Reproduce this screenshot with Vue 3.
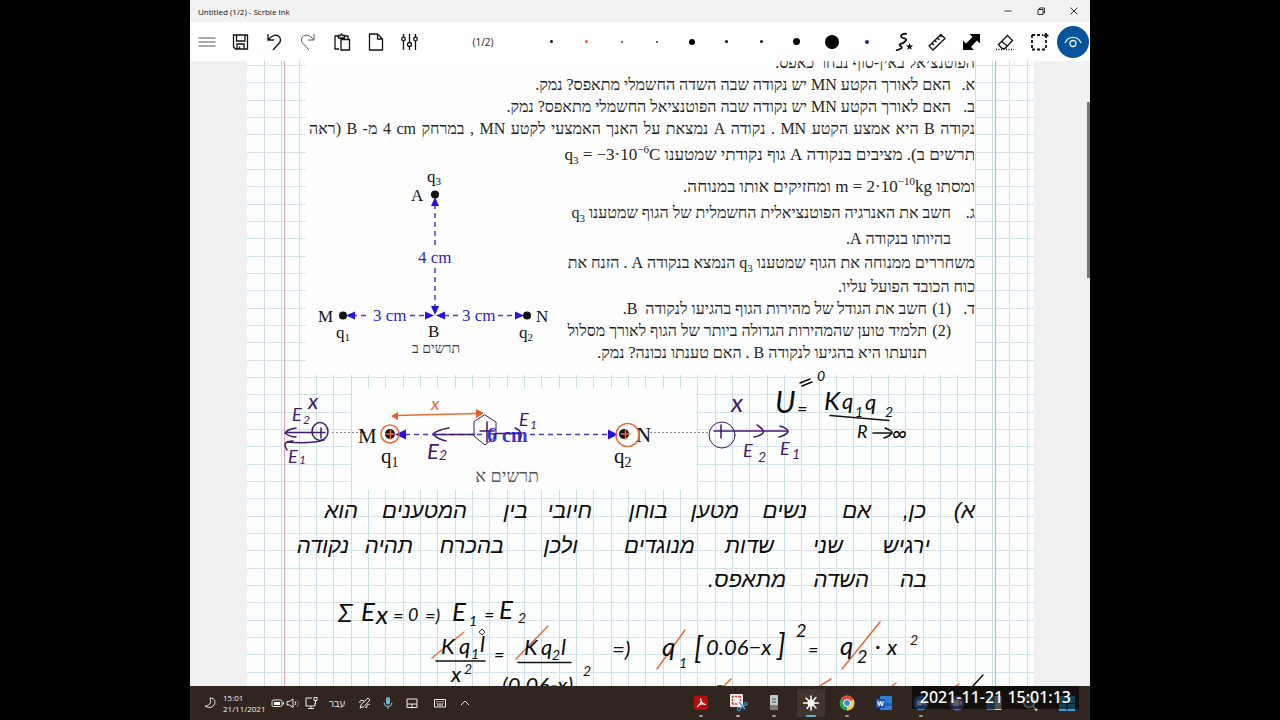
<script setup>
const range = (from, to, step) => {
  const out = []
  for (let v = from; v <= to; v += step) out.push(Math.round(v))
  return out
}
const columns = range(264, 1034, 17.33)
const rows = range(65, 690, 17.33)

const pens = [
  { d: 3, c: '#111' }, { d: 3, c: '#e0603a' }, { d: 2, c: '#333a5a' }, { d: 2, c: '#3a2a8a' },
  { d: 6, c: '#000' }, { d: 3, c: '#000' }, { d: 3, c: '#111' }, { d: 7, c: '#000' },
  { d: 14, c: '#000' }, { d: 4, c: '#4b1a7a' },
]

const notes = [
  [975, 518, 'א)'], [926, 518, 'כן,'], [871, 518, 'אם'], [807, 518, 'נשים'], [739, 518, 'מטען'],
  [668, 518, 'בוחן'], [592, 518, 'חיובי'], [528, 518, 'בין'], [467, 518, 'המטענים'], [358, 518, 'הוא'],
  [930, 553, 'ירגיש'], [843, 553, 'שני'], [774, 553, 'שדות'], [695, 553, 'מנוגדים'], [578, 553, 'ולכן'],
  [504, 553, 'בהכרח'], [413, 553, 'תהיה'], [349, 553, 'נקודה'],
  [927, 587, 'בה'], [869, 587, 'השדה'], [786, 587, 'מתאפס.'],
]

const ink = [
  [338, 622, 'Σ', 'xl'], [361, 621, 'E', 'xl'], [376, 624, 'x', 'xl'], [393, 622, '=', 'md'],
  [408, 621, '0', 'md'], [425, 622, '=)', 'md'], [452, 621, 'E', 'xl'], [469, 626, '1', 'sm'],
  [484, 621, '=', 'md'], [499, 619, 'E', 'xl'], [518, 623, '2', 'sm'],
  [441, 654, 'K', 'lg'], [459, 654, 'q', 'lg'], [471, 659, '1', 'sm'], [480, 652, 'l', 'lg'],
  [451, 682, 'x', 'lg'], [464, 674, '2', 'sm'], [494, 661, '=', 'md'],
  [524, 655, 'K', 'lg'], [541, 655, 'q', 'lg'], [552, 660, '2', 'sm'], [561, 655, 'l', 'lg'],
  [502, 693, '(0.06-x)', 'lg'], [583, 676, '2', 'sm'], [612, 657, '=)', 'lg'],
  [662, 656, 'q', 'xl'], [679, 668, '1', 'sm'], [694, 659, '[', 'xxl'], [706, 655, '0.06−x', 'lg'],
  [777, 656, ']', 'xxl'], [796, 637, '2', 'md'], [808, 656, '=', 'md'],
  [840, 655, 'q', 'xl'], [857, 663, '2', 'md'], [875, 654, '·', 'lg'], [887, 655, 'x', 'lg'], [910, 645, '2', 'sm'],
  [775, 413, 'U', 'xxl'], [797, 415, '=', 'md'], [817, 381, '0', 'sm'], [824, 410, 'K', 'xl'],
  [842, 409, 'q', 'lg'], [855, 417, '1', 'sm'], [865, 410, 'q', 'lg'], [885, 417, '2', 'sm'],
  [857, 438, 'R', 'md'], [892, 441, '∞', 'lg'],
]
const purple = [
  [308, 409, 'x', 'lg'], [292, 421, 'E', 'md'], [303, 424, '2', 'xs'], [288, 463, 'E', 'md'], [299, 464, '1', 'xs'],
  [519, 426, 'E', 'md'], [530, 429, '1', 'xs'], [427, 459, 'E', 'lg'], [439, 460, '2', 'sm'],
  [731, 412, 'x', 'xl'], [743, 457, 'E', 'md'], [758, 462, '2', 'sm'], [780, 455, 'E', 'md'], [792, 459, '1', 'sm'],
]
</script>

<template>
  <main class="window">
    <header class="titlebar">
      <h1>Untitled (1/2) - Scrble Ink</h1>
      <div class="controls">
        <button aria-label="Minimize"><svg viewBox="0 0 10 10"><path d="M1.500 5h7" /></svg></button>
        <button aria-label="Restore"><svg viewBox="0 0 10 10"><path d="M2 3.500h5v5H2zM3.500 3.500V2h5v5H7" /></svg></button>
        <button aria-label="Close"><svg viewBox="0 0 10 10"><path d="M1.500 1.500l7 7M8.500 1.500l-7 7" /></svg></button>
      </div>
    </header>

    <nav class="toolbar" aria-label="Tools">
      <button aria-label="Menu"><svg viewBox="0 0 20 20" class="thin"><path d="M1.500 6h17M1.500 10h17M1.500 14h17" /></svg></button>
      <button aria-label="Save"><svg viewBox="0 0 20 20"><path d="M2.500 3h14v14H4.500l-2-2zM5.500 3v6h8.500V3M6 17v-5h7v5M8.500 14.500V17" /></svg></button>
      <button aria-label="Undo"><svg viewBox="0 0 20 20"><path d="M3 2v6h6M3.500 7.500C7 3 12 2 14.500 5c2 3 1 5-1 7L8 18" /></svg></button>
      <button aria-label="Redo"><svg viewBox="0 0 20 20" class="thin"><path d="M15 2v6H9M14.500 7.500C11 3 6 2 3.500 5c-2 3-1 5 1 7L10 18" /></svg></button>
      <button aria-label="Paste"><svg viewBox="0 0 20 20"><path d="M6 17H2V4h4M11 4h4v3M5.500 6V3.500h2q1-3 2 0h2V6zM8 7.500h8.500V18H8z" /></svg></button>
      <button aria-label="New page"><svg viewBox="0 0 20 20"><path d="M2.500 2h8l5 5v11h-13zM10.500 2v5h5" /></svg></button>
      <button aria-label="Settings"><svg viewBox="0 0 20 20"><path d="M2.500 2v3M2.500 9v9M8.500 2v8M8.500 15v3M14.500 2v3M14.500 9v9" /><circle cx="2.500" cy="7" r="1.800" /><circle cx="8.500" cy="12.500" r="2" /><circle cx="14.500" cy="7" r="1.800" /></svg></button>
      <span class="pages">(1/2)</span>
      <button v-for="(p, i) in pens" :key="i" class="pen" :aria-label="'Pen ' + (i + 1)">
        <i :style="{ width: p.d + 'px', height: p.d + 'px', background: p.c }"></i>
      </button>
      <span class="tools">
        <button aria-label="Shape pen"><svg viewBox="0 0 20 20" class="bold"><path d="M14 2c-4-1-8 2-5 3.500s6 1 3 4-7 2-5 4 3 2 0 3.500-4 1-4 1" /><path class="solid" d="M16.500 11l1 2.500h2.500l-2 1.700.8 2.500-2.300-1.500-2.300 1.500.8-2.500-2-1.700h2.500z" /></svg></button>
        <button aria-label="Ruler"><svg viewBox="0 0 20 20"><path d="M2 14L14 2.500l4 4L6 18zM5 11l2 2M8 8.500l1.500 1.500M10.500 6l2 2M13 3.500l1.500 1.500" /></svg></button>
        <button aria-label="Resize"><svg viewBox="0 0 20 20"><path class="solid" d="M8.500 2H19v9.500l-3-3L10 15l3 3H2V8.500l3 3L11.500 5z" /></svg></button>
        <button aria-label="Eraser"><svg viewBox="0 0 20 20"><path d="M3.500 12.500l9-9 5 5-7.500 8H7zM6.500 9.500l6 4.500" /><path d="M1 17.500h18" stroke-dasharray="1 1.500" /></svg></button>
        <button aria-label="Select"><svg viewBox="0 0 20 20" class="bold"><path d="M3 3h11M17 8v9.500M3 17.500h14M3 3v14.500" stroke-dasharray="3 2" /><path d="M17 1v5M14.500 3.500h5" /></svg></button>
        <button class="view" aria-label="View"><svg viewBox="0 0 20 20"><path d="M2 11C5 3.500 15 3.500 18 11" /><circle cx="10" cy="11.500" r="3" /></svg></button>
      </span>
    </nav>

    <section class="workspace">
      <article class="sheet">
        <svg class="page" viewBox="247 61 787 625">
          <g class="grid">
            <path v-for="x in columns" :key="'c' + x" class="col" :d="`M${x + 0.5} 61V690`" />
            <path v-for="y in rows" :key="'r' + y" class="row" :d="`M247 ${y + 0.5}H1034`" />
            <path class="margin" d="M284.500 61V690M995.500 61V690" />
          </g>
          <rect class="paste" x="306" y="61" width="669" height="314" />
          <rect class="paste" x="352" y="388" width="344" height="102" />

          <foreignObject x="309" y="52" width="666" height="320">
            <div class="problem" lang="he" dir="rtl">
              <p>הפוטנציאל באין-סוף נבחר כאפס.</p>
              <p><b>א.</b>האם לאורך הקטע MN יש נקודה שבה השדה החשמלי מתאפס? נמק.</p>
              <p><b>ב.</b>האם לאורך הקטע MN יש נקודה שבה הפוטנציאל החשמלי מתאפס? נמק.</p>
              <p class="fill">נקודה B היא אמצע הקטע MN . נקודה A נמצאת על האנך האמצעי לקטע MN , במרחק <bdi dir="ltr">4 cm</bdi> מ- B (ראה</p>
              <p class="gap big">תרשים ב). מציבים בנקודה A גוף נקודתי שמטענו <bdi dir="ltr">q<sub>3</sub> = −3·10<sup>−6</sup>C</bdi></p>
              <p class="wide big">ומסתו <bdi dir="ltr">m = 2·10<sup>−10</sup>kg</bdi> ומחזיקים אותו במנוחה.</p>
              <p class="gap"><b>ג.</b>חשב את האנרגיה הפוטנציאלית החשמלית של הגוף שמטענו <bdi dir="ltr">q<sub>3</sub></bdi></p>
              <p class="gap"><b></b>בהיותו בנקודה A.</p>
              <p class="near">משחררים ממנוחה את הגוף שמטענו <bdi dir="ltr">q<sub>3</sub></bdi> הנמצא בנקודה A . הזנח את</p>
              <p class="near">כוח הכובד הפועל עליו.</p>
              <p><b>ד.</b><b>(1)</b>חשב את הגודל של מהירות הגוף בהגיעו לנקודה&nbsp; B.</p>
              <p><b></b><b>(2)</b>תלמיד טוען שהמהירות הגדולה ביותר של הגוף לאורך מסלול</p>
              <p><b></b><b></b>תנועתו היא בהגיעו לנקודה B . האם טענתו נכונה? נמק.</p>
            </div>
          </foreignObject>

          <g class="figure">
            <path class="dash" d="M435 204V246M435 268V306M352 315.500H370M410 315.500H426M444 315.500H460M498 315.500H516" />
            <path class="tip" d="M435 197l4 9h-8zM435 315l4-9h-8zM346 315.500l9-4v8zM434 315.500l-9-4v8zM436 315.500l9-4v8zM524 315.500l-9-4v8z" />
            <circle cx="435" cy="194.500" r="4" /><circle cx="343" cy="315.500" r="4" /><circle cx="527" cy="315.500" r="4" />
            <text x="427" y="182">q<tspan class="sub" dy="3">3</tspan></text>
            <text x="411" y="201">A</text>
            <text x="318" y="322">M</text>
            <text x="336" y="338">q<tspan class="sub" dy="3">1</tspan></text>
            <text x="428" y="337">B</text>
            <text x="536" y="322">N</text>
            <text x="519" y="338">q<tspan class="sub" dy="3">2</tspan></text>
            <text class="blue" x="418" y="263">4 cm</text>
            <text class="blue" x="373" y="321">3 cm</text>
            <text class="blue" x="462" y="321">3 cm</text>
            <text class="caption" x="460" y="353">תרשים ב</text>
          </g>

          <g class="figure large">
            <path class="axis" d="M332 432.500H368M650 432.500H710" />
            <path class="dash" d="M405 434.500H484M530 434.500H608" />
            <path class="tip" d="M395 434.500l11-5v10zM618 434.500l-10-5v10z" />
            <circle cx="390" cy="434" r="5" /><circle cx="624" cy="434" r="5" />
            <text x="358" y="443">M</text>
            <text x="636" y="442">N</text>
            <text x="381" y="463">q<tspan class="sub" dy="4">1</tspan></text>
            <text x="614" y="463">q<tspan class="sub" dy="4">2</tspan></text>
            <text class="blue strong" x="487" y="442">6 cm</text>
            <text class="caption" x="539" y="482">תרשים א</text>
          </g>

          <g class="stroke orange">
            <circle cx="390" cy="434" r="9" /><circle cx="627.500" cy="435" r="11.500" />
            <path d="M386 434h9M390.500 430v9M621 434h9M625.500 430v9M397 415.500L476 413.500" />
            <path class="tip" d="M391 416l7-4v8zM484 413l-8-4v9z" />
            <path d="M432 658L464 632M516 659L548 626M657 669L685 630M842 669L880 622M723 687L731 679M820 686L831 679M891 687L896 683M955 687L959 684" />
          </g>
          <text class="ink orange-text md" x="431" y="410">x</text>

          <g class="stroke violet">
            <ellipse cx="320" cy="431.500" rx="8" ry="9" />
            <path d="M315 432.500h10M321 428v10M322 432.500H286M296 428Q288 429 285 433Q290 437 296 437M324 440Q310 444 287 442M293 441Q281 441 287 450" />
            <path d="M485 415l11 7v14l-11 9-11-9v-14z" stroke-width="1" />
            <path d="M487 422v20M480 431h14M495 433.500H520M515 428q9 4 5 11M474 434.500H435M449 428Q437 430 433 434Q437 439 446 441" />
            <circle cx="722" cy="435" r="13" stroke-width="1" />
            <path d="M721 425v13M714 431h74M757 425q8 5 6 8q-3 3-9 4M780 426q9 3 8 6q-2 3-9 5" />
          </g>
          <g class="ink violet-text">
            <text v-for="(m, i) in purple" :key="i" :x="m[0]" :y="m[1]" :class="m[3]">{{ m[2] }}</text>
          </g>

          <g class="stroke black">
            <path d="M800 383l10-4M802 386l10-4M830 415.500l59 5M873 433h19M885 428q8 3 7 5q-2 3-8 5" />
            <path d="M436 661H485M518 662.500H571M972 687L983 675M718 686h4" />
          </g>
          <g class="ink">
            <text v-for="(m, i) in ink" :key="i" :x="m[0]" :y="m[1]" :class="m[3]">{{ m[2] }}</text>
          </g>
          <g class="ink hebrew" lang="he">
            <text v-for="(n, i) in notes" :key="i" :x="n[0]" :y="n[1]">{{ n[2] }}</text>
          </g>
          <path class="cursor" d="M482 629l3 3-3 3-3-3z" />
        </svg>
      </article>
      <div class="scrollbar"></div>
    </section>

    <footer class="taskbar">
      <button class="w20" aria-label="Focus"><svg viewBox="0 0 16 16"><path d="M8 3c5 0 6 4 4 7s-6 3-9 1c4 0 7-3 5-8z" /></svg></button>
      <time class="clock">15:01<br />21/11/2021</time>
      <button class="w16" aria-label="Battery"><svg viewBox="0 0 16 16"><rect x="3" y="5" width="10" height="6.500" rx="1.500" /><path d="M14.500 7v2.500" /><path class="solid" d="M5 7h6v3H5z" /></svg></button>
      <button class="w16" aria-label="Volume"><svg viewBox="0 0 16 16"><path d="M2 6.500h2.500L8 4v8.500L4.500 10H2zM10 6.500q1.500 1.500 0 3.500" /><path d="M12 5q3 3.500 0 7" opacity=".4" /></svg></button>
      <button class="w20" aria-label="Network"><svg viewBox="0 0 16 16"><path d="M9 3H3v8h9V8M5 13.500h6M8 11v2M11 2.500h3v3h-3zM12.500 5.500V9" /></svg></button>
      <span class="lang" lang="he">עבר</span>
      <button class="w23" aria-label="Pen menu"><svg viewBox="0 0 16 16"><path d="M3 13l1.500-4L11 3l2 2-6 6.500zM3 8q-1-4 4-2M8 12q2 2 2-1t3-1" /></svg></button>
      <button class="w23 mic" aria-label="Microphone"><svg viewBox="0 0 16 16"><rect class="solid" x="6" y="2" width="4" height="7.500" rx="2" /><path d="M4 7.500q0 4 4 4t4-4M8 11.500V14" /></svg></button>
      <button class="w26" aria-label="Touchpad"><svg viewBox="0 0 16 16"><path d="M3 4h10v8.500H3zM3 9h10M8 9v3.500" /></svg></button>
      <button class="w30" aria-label="Keyboard"><svg viewBox="0 0 16 16"><path d="M2.500 4.500h11v7.500h-11zM5 10h6" /><path d="M4.500 6.500h8M4.500 8.300h8" stroke-dasharray="1 1" /></svg></button>
      <button class="w20" aria-label="Show hidden icons"><svg viewBox="0 0 16 16"><path d="M4 10l4-4 4 4" /></svg></button>

      <div class="apps">
        <button class="run" aria-label="Acrobat"><svg viewBox="0 0 20 20"><rect x="3" y="2.500" width="14" height="14.500" rx="2.500" fill="#b80d0d" /><path d="M9.500 5.500C11 9 9 12 6 14M9.800 8q2 3.500 5 3.500M7.500 12q4-2 7-.5" fill="none" stroke="#fff" stroke-width="1.200" /></svg></button>
        <button class="run rose" aria-label="Snipping Tool"><svg viewBox="0 0 20 20"><rect x="2" y="1" width="13" height="13" rx="1" fill="#f5eeee" /><path d="M4 3.500h9M4 11h6M4.500 3v9M12.500 3v6" fill="none" stroke="#d0443c" stroke-width="1.500" stroke-dasharray="2 1" /><path d="M11 9l6 7M18 11l-7 5" stroke="#4aa6dd" stroke-width="1.500" /><circle cx="11" cy="16" r="1.800" fill="#35312d" stroke="#4aa6dd" /><circle cx="17.500" cy="11" r="1.600" fill="#35312d" stroke="#4aa6dd" /></svg></button>
        <button class="run" aria-label="Device"><svg viewBox="0 0 20 20"><rect x="6" y="2" width="8" height="15" rx="1" fill="#c4c7c4" /><path d="M8 6h4M8 9h4" stroke="#555" /><path d="M6 12h8v5H6z" fill="#7d817d" /></svg></button>
        <button class="run active" aria-label="Scrble Ink"><svg viewBox="0 0 20 20"><circle cx="10" cy="10" r="3.500" fill="#fff" /><path d="M10 10V3M10 10v7M10 10H2.500M10 10h7.500M10 10L5 5M10 10l5-5.500M10 10l-4 5.500M10 10l5 5" stroke="#fff" stroke-width="1.500" stroke-linecap="round" /></svg></button>
        <button class="run" aria-label="Chrome"><svg viewBox="0 0 20 20"><circle cx="10" cy="10" r="7.500" fill="#31a350" /><path d="M10 10L3.500 6.300A7.500 7.500 0 0 1 16.500 6.300z" fill="#dd4b3a" /><path d="M10 10l6.500-3.700A7.500 7.500 0 0 1 10 17.500z" fill="#f7cb3f" /><circle cx="10" cy="10" r="3.500" fill="#4285e8" stroke="#fff" /></svg></button>
        <button aria-label="Word"><svg viewBox="0 0 20 20"><rect x="6" y="3" width="12" height="14" rx="1" fill="#2d7fd3" /><path d="M6 10h12v3H6z" fill="#1a5dbe" /><rect x="2" y="6" width="9" height="9" rx="1" fill="#1d50b0" /><text x="3" y="13" fill="#fff" font-family="Open Sans" font-size="7" font-weight="700">W</text></svg></button>
        <button class="run" aria-label="Zoom"><svg viewBox="0 0 20 20"><circle cx="10" cy="10" r="7.500" fill="#3c80e8" /><path d="M6 7.500h5v5H6zM12 9l2.500-1.500v5L12 11z" fill="#fff" /></svg></button>
        <button aria-label="Chat"><svg viewBox="0 0 20 20"><circle cx="10" cy="10" r="7.500" fill="#6a63c4" /><path d="M6 7h6v6H6zM12.500 9l2.500-1.500v5L12.500 11z" fill="#eee" /></svg></button>
        <button aria-label="Widgets"><svg viewBox="0 0 20 20"><rect x="2.500" y="3" width="7.500" height="14" fill="#2a86ce" /><rect x="10.500" y="3" width="7" height="14" fill="#c9d3dc" /></svg></button>
        <button aria-label="Search"><svg viewBox="0 0 20 20"><circle cx="9" cy="9" r="5.500" fill="#555" stroke="#ddd" stroke-width="1.500" /><path d="M13 13l4 4.500" stroke="#ddd" stroke-width="2" /></svg></button>
        <button aria-label="Start"><svg viewBox="0 0 20 20"><path d="M2 3h7.500v7H2zM10.500 3H18v7h-7.500zM2 11h7.500v7H2zM10.500 11H18v7h-7.500z" fill="#2fa4dc" /></svg></button>
        <time class="stamp">2021-11-21 15:01:13</time>
      </div>
    </footer>
  </main>
</template>

<style>
html, body { margin: 0; background: #000; }
</style>

<style scoped>
.window {
  width: calc(100% - 380px);
  height: 100vh;
  margin: 0 auto;
  display: flex;
  flex-direction: column;
  overflow: hidden;
  background: #f0f0f0;
  font-family: "Open Sans", "Liberation Sans", sans-serif;
}
button {
  display: flex;
  align-items: center;
  justify-content: center;
  padding: 0;
  border: 0;
  background: none;
  color: inherit;
}
.titlebar { display: flex; flex: 0 0 22px; align-items: center; background: #f2f2f2; }
.titlebar h1 { margin: 0; padding-left: 8px; font-size: 8px; font-weight: 400; color: #111; }
.controls { display: flex; margin-left: auto; }
.controls button { width: 33px; height: 22px; }
.controls svg { width: 10px; height: 10px; fill: none; stroke: #333; stroke-width: 1; }

.toolbar { display: flex; flex: 0 0 39px; background: #fff; }
.toolbar button { flex: 0 0 34px; height: 39px; }
.toolbar .pen { flex-basis: 35px; }
.pen i { display: block; border-radius: 50%; }
.toolbar svg { width: 20px; height: 20px; fill: none; stroke: #111; stroke-width: 1.300; }
.toolbar svg.thin { stroke: #555; stroke-width: 1; }
.toolbar svg.bold { stroke-width: 1.800; }
.toolbar .solid { fill: #000; stroke: none; }
.pages { flex: 1; align-self: center; padding-left: 4px; text-align: center; font-size: 10px; color: #222; }
.tools { display: flex; margin-left: 2px; }
.toolbar .view { position: relative; z-index: 0; }
.view::before {
  content: "";
  position: absolute;
  inset: 4px 1px 3px;
  z-index: -1;
  border-radius: 50%;
  background: #05549c;
}
.toolbar .view svg { stroke: #e6f1fb; }

.workspace { position: relative; flex: 1; min-height: 0; overflow: hidden; }
.sheet { height: 100%; margin: 0 56px 0 57px; overflow: hidden; background: #fdfefe; }
.page { display: block; width: 100%; height: auto; }
.scrollbar { position: absolute; top: 41px; right: 0; width: 3px; height: 176px; background: #777; }
.grid path { fill: none; stroke-width: 1; }
.grid .col { stroke: #c9e0e9; }
.grid .row { stroke: #d4e2ea; }
.grid .margin { stroke: #dba4b8; }
.paste { fill: #fefefe; }

.problem { font-family: "Liberation Serif", serif; font-size: 16px; color: #222; }
.problem p { display: flex; margin: 0; height: 22px; line-height: 22px; white-space: pre; }
.problem p.fill { display: block; white-space: normal; text-align: justify; text-align-last: justify; }
.problem p.big { font-size: 17px; }
.problem p.gap { padding-top: 4px; }
.problem p.near { padding-top: 2px; }
.problem p.wide { padding-top: 10px; }
.problem b { flex: 0 0 24px; font-weight: 400; }
.problem sub, .problem sup { font-size: 11px; line-height: 0; }

.figure { font-family: "Liberation Serif", serif; font-size: 17px; fill: #111; }
.figure.large { font-size: 21px; }
.sub { font-size: 11px; }
.large .sub { font-size: 14px; }
.figure .blue { fill: #2a1fc8; }
.figure .strong { font-size: 20px; font-weight: 700; fill: #3a34d8; }
.caption { direction: rtl; font-size: 14px; fill: #333; }
.large .caption { font-size: 18px; fill: #555; }
.dash { fill: none; stroke: #4a40c8; stroke-width: 1.500; stroke-dasharray: 5 4; }
.tip { fill: #2413e0; }
.axis { fill: none; stroke: #889; stroke-dasharray: 2 2; }

.stroke { fill: none; stroke-width: 1.500; stroke-linecap: round; stroke-linejoin: round; }
.orange { stroke: #ec6a35; }
.orange .tip { fill: #f25a1c; stroke: none; }
.violet { stroke: #44196e; }
.black { stroke: #111; }
.ink { font-family: Lato, "Liberation Sans", sans-serif; font-style: italic; fill: #0c0c0c; }
.violet-text { fill: #44196e; }
.orange-text { fill: #ec6a35; }
.xs { font-size: 12px; }
.sm { font-size: 14px; }
.md { font-size: 18px; }
.lg { font-size: 22px; }
.xl { font-size: 26px; }
.xxl { font-size: 30px; }
.hebrew { direction: rtl; font-family: "Liberation Sans", sans-serif; font-size: 22px; }
.cursor { fill: #fff; stroke: #333; stroke-width: 1; }

.taskbar { display: flex; flex: 0 0 34px; padding: 0 5px 0 10px; background: #30261f; color: #eee; }
.taskbar > button svg { width: 16px; height: 16px; fill: none; stroke: #eee; stroke-width: 1; }
.taskbar > button .solid { fill: #fff; stroke: none; }
.taskbar .mic svg { stroke: #8cc; }
.taskbar .mic .solid { fill: #6bb9c4; }
.clock { flex: 0 0 46px; align-self: center; padding-left: 3px; font-size: 8px; line-height: 11px; white-space: nowrap; }
.lang { flex: 0 0 32px; align-self: center; text-align: center; font-size: 10px; }
.w16 { flex: 0 0 16px; }
.w20 { flex: 0 0 20px; }
.w23 { flex: 0 0 23px; }
.w26 { flex: 0 0 26px; }
.w30 { flex: 0 0 30px; }
.apps { position: relative; display: flex; flex: 0 0 402px; margin-left: auto; }
.apps button { position: relative; flex: 1; }
.apps svg { width: 20px; height: 20px; }
.run::after {
  content: "";
  position: absolute;
  bottom: 3px;
  left: 50%;
  width: 4px;
  height: 2px;
  margin-left: -2px;
  border-radius: 1px;
  background: #999;
}
.rose::after { background: #e89a9a; }
.active { background: radial-gradient(#40362f, #40362f) center / 28px 28px no-repeat; }
.active::after { width: 10px; margin-left: -5px; background: #5ab4dc; }
.stamp {
  position: absolute;
  top: 0;
  right: 6px;
  padding: 0 8px;
  background: rgba(0, 0, 0, .6);
  color: #fff;
  font: 500 16px/23px "Noto Sans", "Open Sans", sans-serif;
  white-space: nowrap;
}
</style>
